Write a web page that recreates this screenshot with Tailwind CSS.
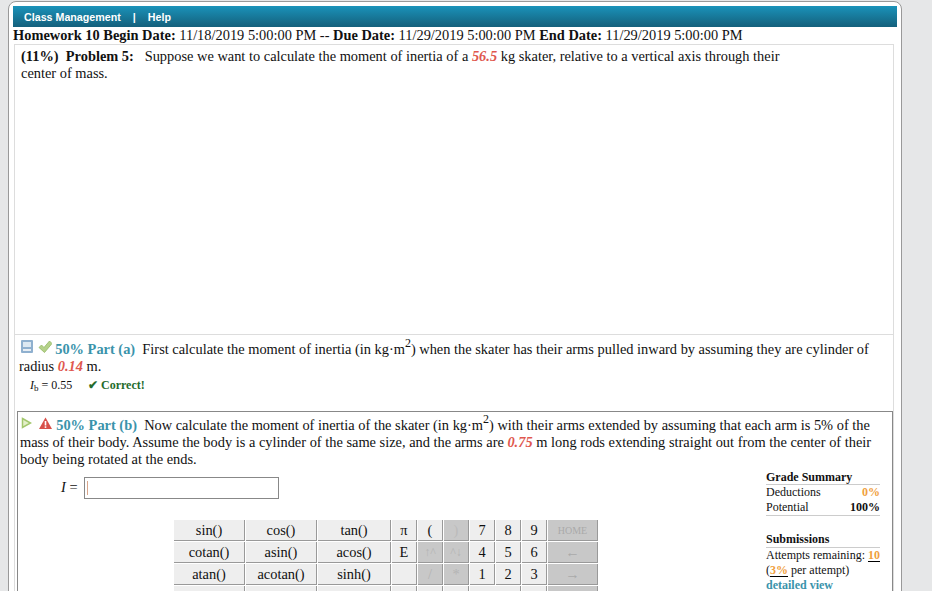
<!DOCTYPE html>
<html lang="en">
<head>
  <meta charset="UTF-8" />
  <title>Homework 10</title>
  <script src="https://cdn.jsdelivr.net/npm/@tailwindcss/browser@4"></script>
</head>
<body class="bg-[#e6e7e8] h-[591px] overflow-hidden font-['Liberation_Serif',serif] text-[#111]">
  <div class="ml-2 mt-[1px] w-[894px] h-[700px] bg-white border border-[#999] rounded-t-[8px] pt-[4px] px-1">
    <!-- nav -->
    <div class="h-[21px] bg-gradient-to-b from-[#1a93ba] to-[#14607c] flex items-center pl-[11px] pt-[1px] font-['Liberation_Sans',sans-serif] text-[10.7px] font-bold text-white">
      <a>Class Management</a><span class="ml-[12px] mr-[12px]">|</span><a>Help</a>
    </div>
    <p class="text-[14.4px] leading-[17px] h-[17px] whitespace-nowrap"><b>Homework 10 Begin Date:</b> 11/18/2019 5:00:00 PM -- <b>Due Date:</b> 11/29/2019 5:00:00 PM <b>End Date:</b> 11/29/2019 5:00:00 PM</p>

    <div class="ml-[1px] w-[880px] border border-[#ddd] border-b-0 text-[14.4px] leading-[17px]">
      <!-- problem -->
      <div class="h-[290px] pl-[6px] pt-[3px] border-b border-[#ddd]">
        <p class="w-[770px]"><b>(11%)&nbsp; Problem 5:</b>&nbsp;&nbsp; Suppose we want to calculate the moment of inertia of a <i class="text-[#e0584f] font-bold">56.5</i> kg skater, relative to a vertical axis through their center of mass.</p>
      </div>
      <!-- part a -->
      <div class="h-[76px] pl-[4px] pr-[16px] pt-[6px]">
        <p>
          <svg class="inline-block relative top-[-4px] w-[12px] h-[13px] ml-[2px]" viewBox="0 0 12 13"><rect width="12" height="13" rx="1" fill="#8fb0cf"/><rect x="2" y="2" width="8" height="5" fill="#dce8f2"/><rect x="2" y="9" width="8" height="2" fill="#e8eef4"/></svg>
          <svg class="inline-block relative top-[-4px] w-[14px] h-[13px] ml-[1px]" viewBox="0 0 14 13"><path d="M1 7.500l2.500-2.500 2.500 2.500L11.500 1 14 3.500 6.500 12.500z" fill="#b5d28a" stroke="#93b862" stroke-width="0.800"/></svg>
          <b class="text-[#3a93ab]">50% Part (a)</b>&nbsp; First calculate the moment of inertia (in kg·m<sup class="text-[12px] top-[-7px]">2</sup>) when the skater has their arms pulled inward by assuming they are cylinder of radius <i class="text-[#e0584f] font-bold">0.14</i> m.
        </p>
        <div class="flex items-center text-[12px] h-[17px] mt-[2px] ml-[11px]">
          <span class="w-[58px]"><i>I</i><sub class="text-[9px]">b</sub> = 0.55</span>
          <span class="font-bold text-[#256b2c]">✔ Correct!</span>
        </div>
      </div>
      <!-- part b -->
      <div class="ml-[2px] w-[876px] border border-[#888] pl-[2px] pr-[10px] pt-[5px]">
        <p>
          <svg class="inline-block relative top-[-4px] w-[11px] h-[12px] ml-[1px]" viewBox="0 0 11 12"><path d="M1.500 1.500l8 4.500-8 4.500z" fill="#e4efc9" stroke="#a3c76d" stroke-width="1.500"/></svg>
          <svg class="inline-block relative top-[-4px] w-[13px] h-[12px] ml-[3px]" viewBox="0 0 13 12"><path d="M6.500 0.500L13 12H0z" fill="#d8504a"/><rect x="5.700" y="4" width="1.600" height="4.500" fill="#fff"/><rect x="5.700" y="9.300" width="1.600" height="1.600" fill="#fff"/></svg>
          <b class="text-[#3a93ab] ml-[1px]">50% Part (b)</b>&nbsp; Now calculate the moment of inertia of the skater (in kg·m<sup class="text-[12px] top-[-7px]">2</sup>) with their arms extended by assuming that each arm is 5% of the mass of their body. Assume the body is a cylinder of the same size, and the arms are <i class="text-[#e0584f] font-bold">0.75</i> m long rods extending straight out from the center of their body being rotated at the ends.
        </p>
        <div class="flex justify-between">
          <div>
            <div class="flex items-center mt-[8px] ml-[41px] h-[23px]">
              <span class="w-[23px]"><i>I</i> =</span>
              <div class="w-[195px] h-[22px] border border-[#888] pl-[2px] pt-[3px]"><div class="w-[1px] h-[14px] bg-[#d9a68c]"></div></div>
            </div>
            <div class="ml-[154px] mt-[21px] grid grid-cols-[71px_71px_73px_25px_25px_25px_25px_25px_25px_50px] gap-[1px] text-[14.4px] text-center leading-[21px]">
              <div class="h-[21px] bg-[#eee] border-r border-b border-[#999]">sin()</div>
              <div class="h-[21px] bg-[#eee] border-r border-b border-[#999]">cos()</div>
              <div class="h-[21px] bg-[#eee] border-r border-b border-[#999]">tan()</div>
              <div class="h-[21px] bg-[#eee] border-r border-b border-[#999]">π</div>
              <div class="h-[21px] bg-[#eee] border-r border-b border-[#999]">(</div>
              <div class="h-[21px] bg-[#c8c8c8] text-[#bbb] border-r border-b border-[#999]">)</div>
              <div class="h-[21px] bg-[#eee] border-r border-b border-[#999]">7</div>
              <div class="h-[21px] bg-[#eee] border-r border-b border-[#999]">8</div>
              <div class="h-[21px] bg-[#eee] border-r border-b border-[#999]">9</div>
              <div class="h-[21px] bg-[#c8c8c8] text-[#aaa] border-r border-b border-[#999] text-[10px]">HOME</div>

              <div class="h-[21px] bg-[#eee] border-r border-b border-[#999]">cotan()</div>
              <div class="h-[21px] bg-[#eee] border-r border-b border-[#999]">asin()</div>
              <div class="h-[21px] bg-[#eee] border-r border-b border-[#999]">acos()</div>
              <div class="h-[21px] bg-[#eee] border-r border-b border-[#999]">E</div>
              <div class="h-[21px] bg-[#c8c8c8] text-[#b4b4b4] border-r border-b border-[#999] text-[12px]">↑^</div>
              <div class="h-[21px] bg-[#c8c8c8] text-[#b4b4b4] border-r border-b border-[#999] text-[12px]">^↓</div>
              <div class="h-[21px] bg-[#eee] border-r border-b border-[#999]">4</div>
              <div class="h-[21px] bg-[#eee] border-r border-b border-[#999]">5</div>
              <div class="h-[21px] bg-[#eee] border-r border-b border-[#999]">6</div>
              <div class="h-[21px] bg-[#c8c8c8] text-[#aaa] border-r border-b border-[#999]">←</div>

              <div class="h-[21px] bg-[#eee] border-r border-b border-[#999]">atan()</div>
              <div class="h-[21px] bg-[#eee] border-r border-b border-[#999]">acotan()</div>
              <div class="h-[21px] bg-[#eee] border-r border-b border-[#999]">sinh()</div>
              <div class="h-[21px] bg-[#eee] border-r border-b border-[#999]"></div>
              <div class="h-[21px] bg-[#c8c8c8] text-[#b4b4b4] border-r border-b border-[#999]">/</div>
              <div class="h-[21px] bg-[#c8c8c8] text-[#b4b4b4] border-r border-b border-[#999]">*</div>
              <div class="h-[21px] bg-[#eee] border-r border-b border-[#999]">1</div>
              <div class="h-[21px] bg-[#eee] border-r border-b border-[#999]">2</div>
              <div class="h-[21px] bg-[#eee] border-r border-b border-[#999]">3</div>
              <div class="h-[21px] bg-[#c8c8c8] text-[#aaa] border-r border-b border-[#999]">→</div>

              <div class="h-[21px] bg-[#eee] border-r border-[#999]"></div>
              <div class="h-[21px] bg-[#eee] border-r border-[#999]"></div>
              <div class="h-[21px] bg-[#eee] border-r border-[#999]"></div>
              <div class="h-[21px] bg-[#eee] border-r border-[#999]"></div>
              <div class="h-[21px] bg-[#eee] border-r border-[#999]"></div>
              <div class="h-[21px] bg-[#eee] border-r border-[#999]"></div>
              <div class="h-[21px] bg-[#eee] border-r border-[#999] col-span-2"></div>
              <div class="h-[21px] bg-[#eee] border-r border-[#999]"></div>
              <div class="h-[21px] bg-[#c8c8c8] border-r border-[#999]"></div>
            </div>
          </div>
          <!-- side -->
          <div class="w-[114px] text-[12px] leading-[15px] mr-[2px]">
            <h4 class="font-bold border-b border-[#ccc] h-[15px] mt-[2px]">Grade Summary</h4>
            <div class="flex justify-between"><span>Deductions</span><b class="text-[#f0a040] font-bold">0%</b></div>
            <div class="flex justify-between border-b border-[#ccc] h-[16px]"><span>Potential</span><b>100%</b></div>
            <h4 class="font-bold border-b border-[#ccc] mt-[16px] h-[16px]">Submissions</h4>
            <p class="whitespace-nowrap">Attempts remaining: <b class="underline underline-offset-2 decoration-black"><span class="text-[#f0a040]">10</span></b></p>
            <p>(<b class="underline underline-offset-2 decoration-black"><span class="text-[#f0a040]">3%</span></b> per attempt)</p>
            <p class="font-bold text-[#3a93ab]">detailed view</p>
          </div>
        </div>
      </div>
    </div>
  </div>
</body>
</html>
